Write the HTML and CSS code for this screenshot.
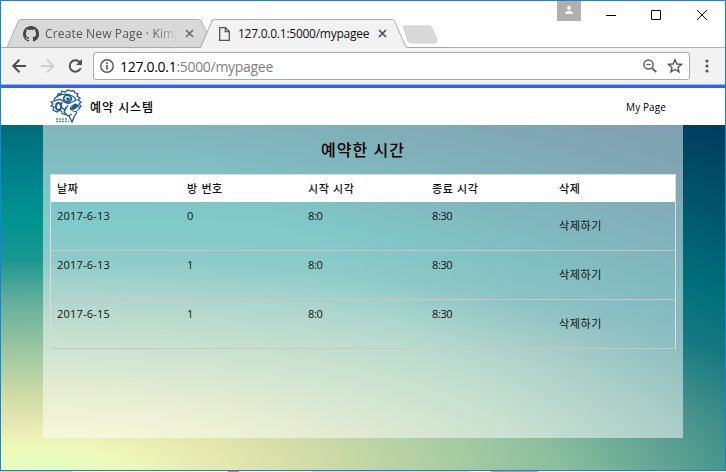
FILE: index.html
```
<!DOCTYPE html>
<html lang="ko">
<head>
<meta charset="utf-8">
<title>예약 시스템</title>
<link rel="stylesheet" href="styles.css">
</head>
<body>
<div class="window">
  <header class="tabbar">
    <div class="tabs">
      <svg class="tab-shapes" width="450" height="30" viewBox="0 0 450 30">
        <path d="M6 28.500L17.500 2Q18.500 .5 20 .5H197.500Q199 .5 200 2L206 14L199.500 28.500Z" fill="#d9d9d9" stroke="#b0b0b0"/>
        <path d="M402.500 8Q401.500 7 403 7H428Q430 7 431 9L436 21Q436 24 434 24H411Q408 24 407 22Z" fill="#d9d9d9" stroke="#d0d0d0"/>
        <path d="M0 28.500H199.500L211 2Q212 .5 213.500 .5H391Q392.500 .5 393.500 2L404 26Q405 28.500 407 28.500H450V30H0Z" fill="#f2f2f2"/>
        <path d="M0 28.500H199.500L211 2Q212 .5 213.500 .5H391Q392.500 .5 393.500 2L404 26Q405 28.500 407 28.500H450" fill="none" stroke="#a9a9a9"/>
      </svg>
      <div class="tab tab-back">
        <svg width="16" height="16" viewBox="0 0 16 16" fill="#464646"><path d="M8 0C3.600 0 0 3.600 0 8c0 3.500 2.300 6.500 5.500 7.600.4.100.5-.2.500-.4v-1.400c-2.200.5-2.700-1-2.700-1-.4-.9-.9-1.200-.9-1.200-.7-.5.1-.5.100-.5.800.1 1.200.8 1.200.8.700 1.200 1.900.9 2.300.7.100-.5.300-.9.500-1.100-1.800-.2-3.600-.9-3.600-4 0-.9.300-1.600.8-2.100-.1-.2-.4-1 .1-2.100 0 0 .7-.2 2.200.8a7.600 7.600 0 014 0c1.500-1 2.200-.8 2.200-.8.400 1.100.2 1.900.1 2.100.5.600.8 1.300.8 2.100 0 3.100-1.900 3.700-3.700 3.900.3.300.6.800.6 1.500v2.300c0 .2.100.5.600.4A8 8 0 008 0z"/></svg>
        <span class="tab-title faded">Create New Page · KimJ</span>
        <svg class="close" width="9" height="9" viewBox="0 0 9 9"><path d="M1 1l7 7M8 1L1 8" stroke="#6b6b6b" stroke-width="1.700"/></svg>
      </div>
      <div class="tab tab-front">
        <svg width="11" height="14" viewBox="0 0 11 14" fill="none" stroke="#555" stroke-width="1.300"><path d="M.7.700H6.500L10.300 4.500V13.300H.7Z"/><path d="M6.300.7V4.700H10.300"/></svg>
        <span class="tab-title">127.0.0.1:5000/mypagee</span>
        <svg class="close" width="9" height="9" viewBox="0 0 9 9"><path d="M1 1l7 7M8 1L1 8" stroke="#505050" stroke-width="1.700"/></svg>
      </div>
    </div>
    <div class="controls">
      <span class="profile"><svg width="8" height="8" viewBox="0 0 8 8" fill="#fff"><circle cx="4" cy="2" r="1.900"/><path d="M0 8V6.500Q1 5 4 5T8 6.500V8Z"/></svg></span>
      <svg width="118" height="12" viewBox="0 0 118 12" fill="none" stroke="#000"><path d="M0 6.500H10M45.500 1.500h9v9h-9zM91 1l10 10M101 1L91 11"/></svg>
    </div>
  </header>

  <div class="toolbar">
    <svg class="nav" width="76" height="18" viewBox="0 0 76 18" fill="none" stroke-width="2">
      <path d="M15 9H2M8.500 2.700L2.200 9L8.500 15.300" stroke="#505050"/>
      <path d="M29.500 9H42M36 2.700L42.300 9L36 15.300" stroke="#d0d0d0"/>
      <path d="M68.700 5.200A5.700 5.700 0 1 0 69.700 11" stroke="#505050"/><path d="M71 2V8H65Z" fill="#505050"/>
    </svg>
    <div class="omnibox">
      <svg width="14" height="14" viewBox="0 0 14 14" fill="none" stroke="#505050" stroke-width="1.400"><circle cx="7" cy="7" r="6.200"/><path d="M7 6V10.500M7 3.300V4.900" stroke-width="1.600"/></svg>
      <span class="url">127.0.0.1<span class="path">:5000/mypagee</span></span>
      <svg class="zoom" width="14" height="14" viewBox="0 0 14 14" fill="none" stroke="#606060" stroke-width="1.500"><circle cx="5.500" cy="5.500" r="4.600"/><path d="M9 9L13.200 13.200" stroke-width="1.900"/><path d="M3.300 5.500H7.700" stroke-width="1.200"/></svg>
      <svg width="16" height="16" viewBox="0 0 16 16" fill="none" stroke="#555" stroke-width="1.400"><path d="M8 1.800L9.900 6L14.400 6.400L11 9.400L12 13.900L8 11.500L4 13.900L5 9.400L1.600 6.400L6.100 6Z"/></svg>
    </div>
    <svg class="dots" width="4" height="14" viewBox="0 0 4 14" fill="#555"><circle cx="2" cy="2" r="1.600"/><circle cx="2" cy="7" r="1.600"/><circle cx="2" cy="12" r="1.600"/></svg>
  </div>

  <nav class="navbar">
    <svg class="logo" width="33" height="34" viewBox="0 0 33 34" fill="none" stroke="#1d5a93" stroke-width="1.300">
      <path d="M7 8L8 5L11 5L12 2L15 3L18 1L21 2L24 2L25 4L28 5L27 7L30 9L28 11L31 13L29 15L31 17L29 20"/>
      <path d="M8 7L5 9L4 12L1 13L3 15L1 17L4 18L3 21L7 23L10 21L12 23"/>
      <path d="M8 7Q14 4 20 6T26 12M5 12Q10 9 13 12T20 14L26 11M12 13L11 18L15 21L18 16"/>
      <ellipse cx="17.500" cy="9.500" rx="3.800" ry="3.400" stroke-width="1.800"/>
      <circle cx="18" cy="10" r="1.200" fill="#1d5a93"/>
      <ellipse cx="8.500" cy="17.500" rx="2.600" ry="3.500" stroke-width="1.800"/>
      <path d="M20 19Q23 14 28 16Q31 19 27 22Q23 24 20 19Z" stroke-width="1"/>
      <path d="M21 20L25 15L28 17L24 20Z" fill="#1d5a93"/>
      <path d="M16 18L14 23L18 27L22 25M19 27L22 33L24 28L27 23M11 24L16 26"/>
      <path d="M6 30H18M6 32.500H19" stroke-dasharray="2 1" stroke-width="1.300" opacity=".7"/>
    </svg>
    <span class="brand">예약 시스템</span>
    <a class="mypage">My Page</a>
  </nav>

  <main class="content">
    <section class="panel">
      <h1>예약한 시간</h1>
      <div class="table">
        <div class="row head"><span>날짜</span><span>방 번호</span><span>시작 시각</span><span>종료 시각</span><span>삭제</span></div>
        <div class="row"><span>2017-6-13</span><span>0</span><span class="time">8:0</span><span class="time">8:30</span><a>삭제하기</a></div>
        <div class="row"><span>2017-6-13</span><span>1</span><span class="time">8:0</span><span class="time">8:30</span><a>삭제하기</a></div>
        <div class="row"><span>2017-6-15</span><span>1</span><span class="time">8:0</span><span class="time">8:30</span><a>삭제하기</a></div>
      </div>
    </section>
  </main>
</div>
<div class="below"></div>
</body>
</html>
```
FILE: styles.css
```
* { box-sizing: border-box; }
body { margin: 0; width: 726px; height: 472px; overflow: hidden; background: #fff; font-family: "Open Sans", "Noto Sans CJK KR", sans-serif; color: #000; }
svg { display: block; flex: none; }
span, a { white-space: nowrap; }
.window { height: 471px; border: 1px solid #1a82d8; display: flex; flex-direction: column; }

.tabbar { height: 47px; flex: none; display: flex; justify-content: space-between; background: linear-gradient(#b0b0b0, #b0b0b0) 0 46px / 100% 1px no-repeat; }
.tabs { position: relative; width: 450px; height: 48px; padding-top: 18px; display: flex; }
.tab-shapes { position: absolute; left: 0; top: 18px; }
.tab { position: relative; height: 29px; display: flex; align-items: center; font-size: 12px; }
.tab-back { width: 194px; padding-left: 22px; color: #555; }
.tab-front { width: 200px; padding-left: 24px; color: #111; }
.tab-title { margin-left: 6px; width: 132px; overflow: hidden; letter-spacing: .15px; }
.tab-front .tab-title { margin-left: 8px; width: 134px; letter-spacing: -.25px; }
.tab-back .close { margin-left: 8px; }
.tab-front .close { margin-left: 6px; }
.faded { -webkit-mask-image: linear-gradient(90deg, #000 108px, transparent 133px); mask-image: linear-gradient(90deg, #000 108px, transparent 133px); }

.controls { display: flex; width: 168px; }
.profile { width: 24px; height: 20px; background: #b0b0b0; display: flex; justify-content: center; padding-top: 5px; margin-right: 25px; }
.controls > svg { margin-top: 8px; }

.toolbar { height: 37px; flex: none; background: #f2f2f2; border-bottom: 1px solid #b5b5b5; display: flex; align-items: center; padding: 0 16px 0 10px; }
.omnibox { margin-left: 6px; width: 598px; height: 28px; border: 1px solid #a9a9a9; border-radius: 3px; background: #fff; display: flex; align-items: center; padding: 0 6px; }
.url { flex: 1; margin-left: 6px; font-size: 14px; letter-spacing: -.3px; }
.path { color: #808080; }
.zoom { margin-right: 10px; }
.dots { margin-left: 15px; }

.navbar { height: 40px; flex: none; background: #fff; border-top: 3px solid #2962ff; display: flex; align-items: center; padding: 0 59px 0 49px; }
.logo { margin-top: -1px; }
.brand { flex: 1; margin-left: 7px; font: 500 12px "Noto Sans CJK KR", sans-serif; letter-spacing: .9px; }
.mypage { font-size: 10px; letter-spacing: .1px; }

.content { flex: 1; padding: 0 42px; background: linear-gradient(40deg, rgba(0,30,75,0) 50%, rgba(0,30,75,.5)), radial-gradient(ellipse 960px 245px at 45px 340px, #e2ffc0 0%, #eef8ba 8%, #e4e8b0 18%, #d2dba6 28%, #a7cba2 43%, #66b09a 66%, #1b9792 84%, #009490 100%, #00828a 118%, #006c78 140%, #005070 165%, #004060 200%); }
.panel { height: 313px; padding: 0 7px; background: rgba(255,255,255,.5); }
h1 { margin: 0; height: 49px; text-align: center; font: 500 16px/49px "Noto Sans CJK KR", sans-serif; letter-spacing: 1px; }
.table { border: 1px solid #ddd; border-bottom: 0; }
.row { display: grid; grid-template-columns: 130px 121px 124px 127px 1fr; height: 49px; padding: 5px 6px 0; border-bottom: 1px solid #c8c8c8; font-size: 11px; line-height: 17px; letter-spacing: .2px; color: #111; }
.head { height: 27px; border: 0; background: #fff; font-family: "Noto Sans CJK KR", sans-serif; font-weight: 500; letter-spacing: .6px; }
.time { letter-spacing: -.4px; }
.row a { padding-top: 10px; letter-spacing: .6px; }
.below { height: 1px; background: linear-gradient(90deg, #b5dcb5 0 72px, #fff 72px 228px, #e76d94 228px 239px, #fff 239px 312px, #c4e1dc 312px 470px, #fff 470px 491px, #9aa9b4 491px 538px, #fff 538px); }
```
